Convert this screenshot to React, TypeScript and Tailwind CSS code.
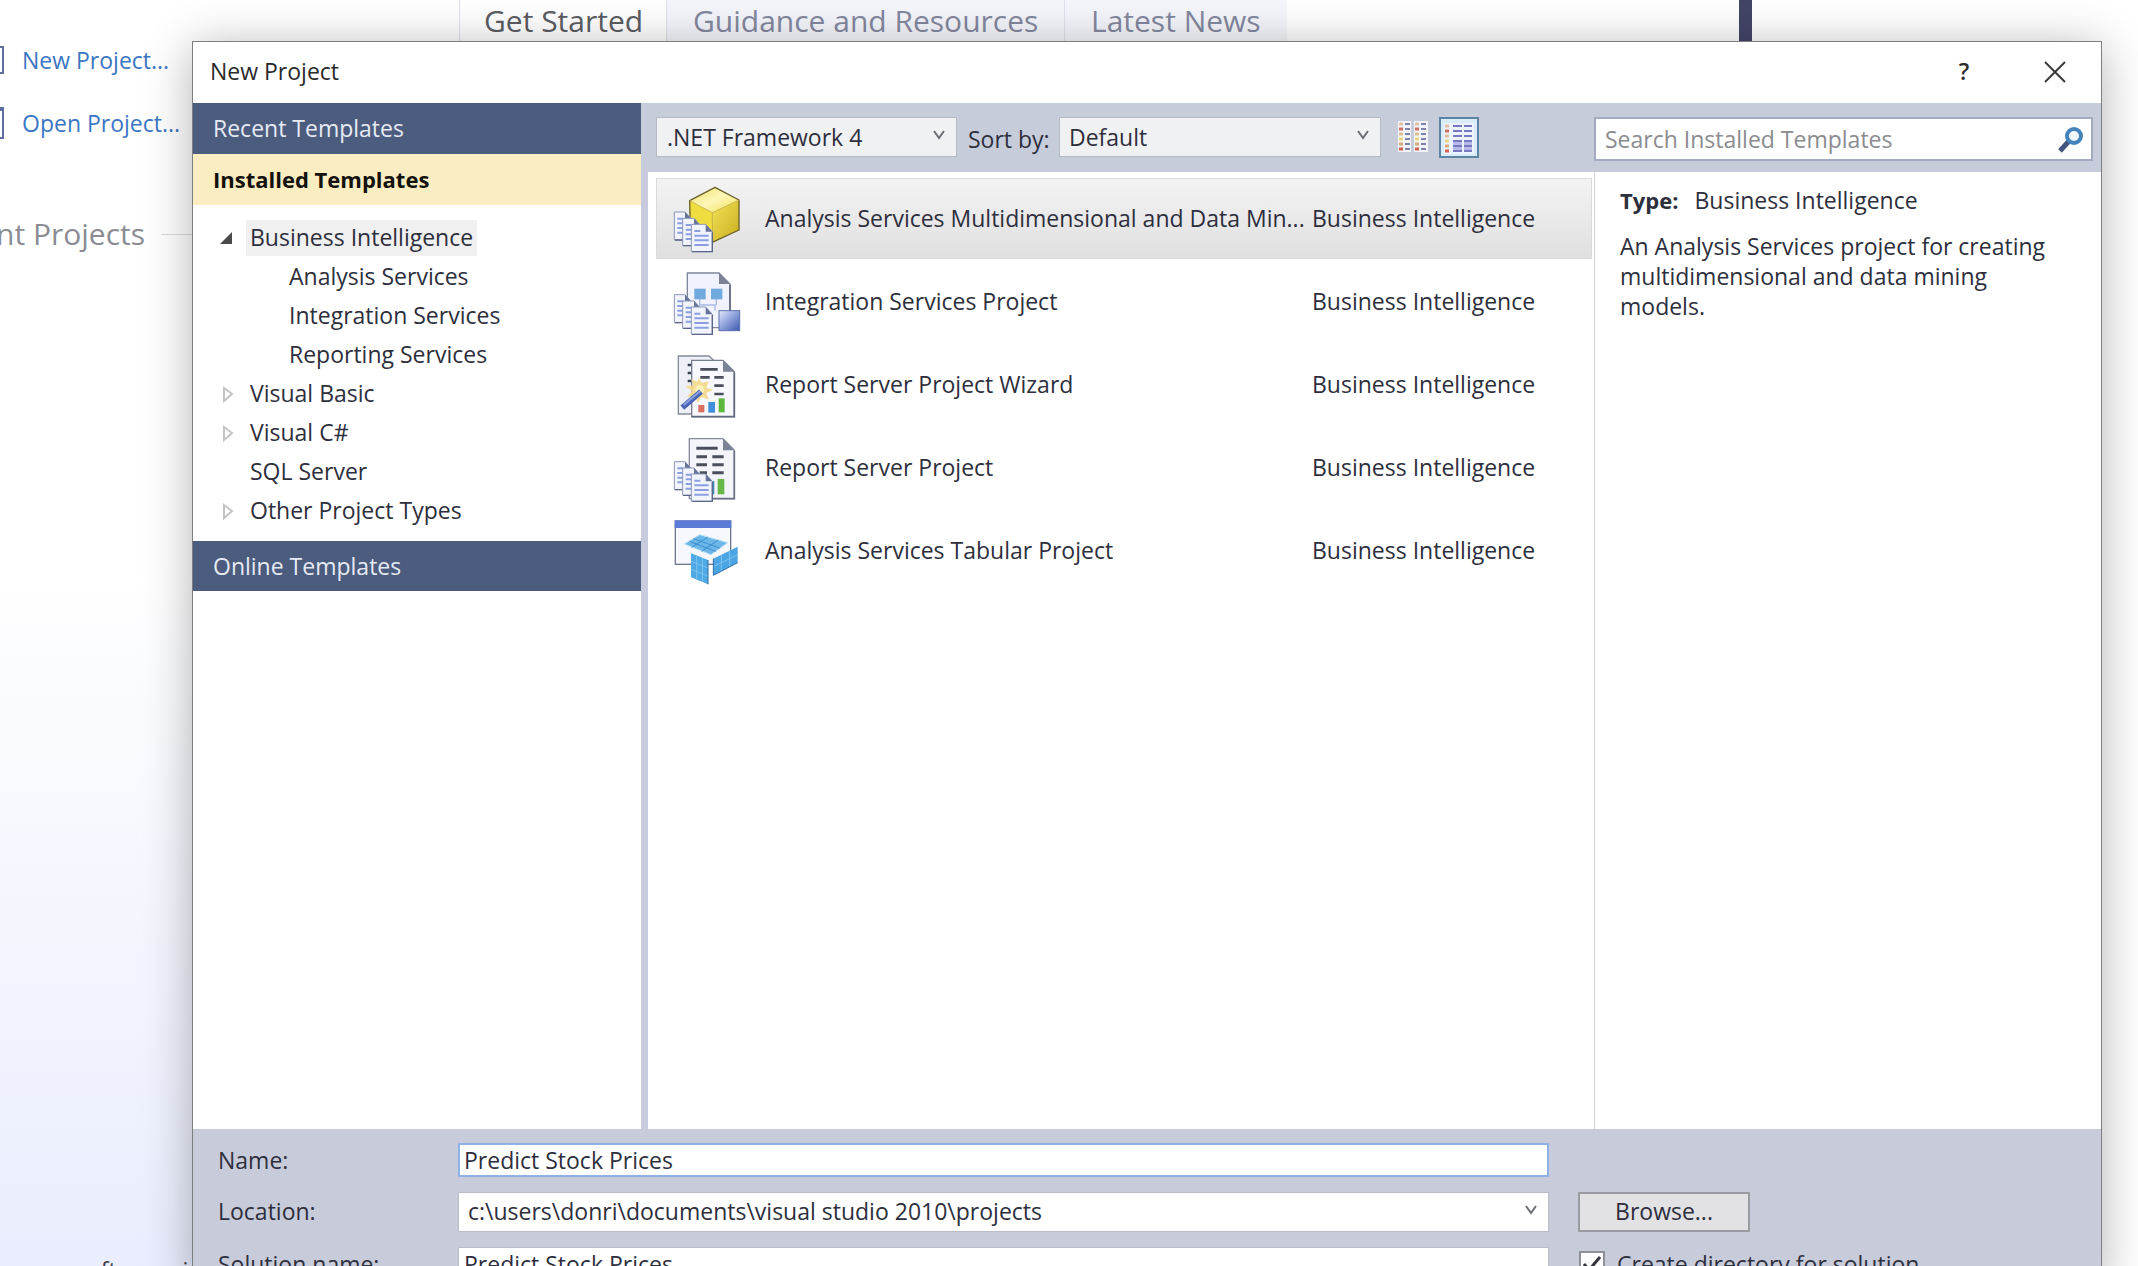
import React from 'react';

function DocStack({ dy = 0 }: { dy?: number }) {
  const pages = [
    { x: 46, y: 126, w: 52, h: 84 },
    { x: 71, y: 145, w: 54, h: 82 },
    { x: 97, y: 163, w: 63, h: 82 },
  ];
  return (
    <g transform={`translate(0 ${dy})`}>
      {pages.map((p) => (
        <g key={p.x}>
          <path
            d={`M${p.x} ${p.y}h${p.w - 20}l20 22v${p.h - 22}h-${p.w}z`}
            fill="#f1f4fd"
            stroke="#8b97b8"
            strokeWidth="3"
          />
          <path d={`M${p.x + 2} ${p.y + p.h}h${p.w - 2}v-${p.h - 24}`} fill="none" stroke="#5b6688" strokeWidth="4" />
          <path d={`M${p.x + p.w - 20} ${p.y}v22h20z`} fill="#66739a" />
          <path
            d={`M${p.x + 9} ${p.y + 20}h18M${p.x + 9} ${p.y + 34}h${p.w - 20}M${p.x + 9} ${p.y + 48}h${p.w - 20}M${p.x + 9} ${p.y + 62}h${p.w - 20}`}
            stroke="#8c9ee2"
            strokeWidth="6"
          />
        </g>
      ))}
    </g>
  );
}

function CubeIcon() {
  return (
    <svg className="size-[72px]" viewBox="36 39 216 216" aria-hidden="true">
      <defs>
        <linearGradient id="cubeTop" x1="0" y1="0" x2="1" y2="1">
          <stop offset="0" stopColor="#f3e46a" />
          <stop offset="0.5" stopColor="#fdf6b8" />
          <stop offset="1" stopColor="#f2df4f" />
        </linearGradient>
        <linearGradient id="cubeSide" x1="0" y1="0" x2="1" y2="1">
          <stop offset="0" stopColor="#f3e25a" />
          <stop offset="1" stopColor="#c9ad1c" />
        </linearGradient>
      </defs>
      <path d="M92 92L160 128L158 218L94 180z" fill="#efdc3f" />
      <path d="M160 128L240 90V180L158 218z" fill="url(#cubeSide)" />
      <path d="M92 92L168 52L240 90L160 128z" fill="url(#cubeTop)" />
      <path d="M92 92L168 52L240 90V180L158 218L94 180z" fill="none" stroke="#6b5f2a" strokeWidth="4" strokeLinejoin="round" />
      <path d="M92 92L160 128L240 90M160 128V216" fill="none" stroke="#b7a02a" strokeWidth="2" />
      <DocStack />
    </svg>
  );
}

function IntegrationIcon() {
  return (
    <svg className="size-[72px]" viewBox="36 18 216 216" aria-hidden="true">
      <defs>
        <linearGradient id="intBox" x1="0" y1="0" x2="1" y2="1">
          <stop offset="0" stopColor="#e3e9fb" />
          <stop offset="0.5" stopColor="#8c9fdb" />
          <stop offset="1" stopColor="#3d58ad" />
        </linearGradient>
      </defs>
      <path d="M85 39H180L213 72V203H85z" fill="#f0f3fd" stroke="#7f8699" strokeWidth="4" />
      <path d="M180 39V72H213z" fill="#7b8296" />
      <path d="M213 74V203" stroke="#636a80" strokeWidth="5" />
      <path d="M122 116V135H168V152M172 116V135" fill="none" stroke="#a9b9e6" strokeWidth="4" />
      <rect x="106" y="86" width="34" height="32" fill="#6fa9dd" />
      <rect x="156" y="86" width="34" height="32" fill="#6fa9dd" />
      <rect x="180" y="152" width="62" height="60" fill="url(#intBox)" stroke="#5a6fb0" strokeWidth="3" />
      <DocStack dy={-22} />
    </svg>
  );
}

function WizardIcon() {
  return (
    <svg className="size-[72px]" viewBox="36 12 216 216" aria-hidden="true">
      <path d="M58 33H150L166 48V207H58z" fill="#eef0f7" stroke="#858b9c" strokeWidth="4" />
      <path d="M86 60h10M86 84h10M86 108h10" stroke="#3c4152" strokeWidth="8" />
      <path d="M98 46H192L226 80V215H98z" fill="#f6f8fd" stroke="#767d91" strokeWidth="4" />
      <path d="M192 46V80H226z" fill="#7b8296" />
      <path d="M226 82V215H98" fill="none" stroke="#5f677e" strokeWidth="5" />
      <path d="M124 73h52M124 97h28M166 97h28M166 122h28M166 147h28" stroke="#4b4f5c" strokeWidth="8" />
      <path
        d="M120 98l8 16l22-6l-8 20l20 6l-20 10l8 20l-22-8l-12 18l-8-20l-24 2l14-18l-18-14l24-4l-8-18l18 8z"
        fill="#f3d98a"
        opacity="0.9"
      />
      <circle cx="122" cy="134" r="13" fill="#fdf3bd" />
      <path d="M70 188L126 140" stroke="#4a64b4" strokeWidth="17" />
      <path d="M74 180L124 138" stroke="#8ba3e2" strokeWidth="6" />
      <rect x="118" y="180" width="18" height="22" fill="#d9705f" />
      <rect x="148" y="171" width="20" height="32" fill="#3f8fdc" />
      <rect x="179" y="160" width="18" height="42" fill="#5cb83a" />
    </svg>
  );
}

function ReportIcon() {
  return (
    <svg className="size-[72px]" viewBox="36 21 216 216" aria-hidden="true">
      <path d="M91 41H192L226 76V221H91z" fill="#f3f5fb" stroke="#858b9c" strokeWidth="4" />
      <path d="M192 41V76H226z" fill="#7b8296" />
      <path d="M226 78V221H120" fill="none" stroke="#6a7187" strokeWidth="5" />
      <path d="M112 70h64M112 95h32M160 95h34M112 119h32M160 119h34M122 143h22M160 143h34" stroke="#4b4f5c" strokeWidth="9" />
      <rect x="146" y="168" width="20" height="40" fill="#3f8fb8" />
      <rect x="176" y="162" width="20" height="46" fill="#68b848" />
      <DocStack dy={-16} />
    </svg>
  );
}

function TabularIcon() {
  return (
    <svg className="size-[72px]" viewBox="36 15 216 216" aria-hidden="true">
      <rect x="49" y="33" width="166" height="130" fill="#f7f8fe" stroke="#72798f" strokeWidth="4" />
      <rect x="47" y="31" width="170" height="23" fill="#5c7bd6" />
      <path d="M76 102L122 74L206 98L156 134z" fill="#6cb7e8" stroke="#b8dff7" strokeWidth="3" />
      <path d="M104 86L182 114M92 94L170 124M146 82L98 112M178 90L128 124" stroke="#3a8fd0" strokeWidth="3" />
      <path d="M96 130L147 150V223L96 202z" fill="#4fa9e4" />
      <path d="M113 137V209M130 143V216M96 154L147 174M96 178L147 198" stroke="#7cc4f2" strokeWidth="3" />
      <path d="M163 146L236 110V158L163 196z" fill="#4aa5e2" />
      <path d="M187 134V183M212 122V170M163 170L236 134" stroke="#7cc4f2" strokeWidth="3" />
      <path d="M147 150V223M163 146V196L236 158" fill="none" stroke="#2f6fa8" strokeWidth="3" />
    </svg>
  );
}

function Chevron() {
  return (
    <svg className="pointer-events-none absolute right-3 top-3 h-3 w-3" viewBox="0 0 12 12" aria-hidden="true">
      <path d="M1 2L6 9L11 2" fill="none" stroke="#6c6f76" strokeWidth="2" />
    </svg>
  );
}

const dotRows = ['#e3c0a8', '#d0705c', '#dcbf90', '#e8d77c', '#d9a878', '#d6604e'];

function SmallIconsGlyph() {
  return (
    <svg className="h-8 w-8" viewBox="0 0 32 32" aria-hidden="true">
      <path d="M1 1H14V32H1zM17 1H31V32H17z" fill="#f2f4fa" />
      {dotRows.map((color, i) => (
        <g key={i}>
          <path d={`M2 ${i * 5 + 4}h4M18 ${i * 5 + 4}h4`} stroke={color} strokeWidth="3" />
          <path d={`M8 ${i * 5 + 4}h5M24 ${i * 5 + 4}h5`} stroke="#7e83ac" strokeWidth="2" />
        </g>
      ))}
    </svg>
  );
}

function MediumIconsGlyph() {
  return (
    <svg className="h-8 w-8" viewBox="0 0 32 32" aria-hidden="true">
      <path d="M1 1H31V32H1z" fill="#eef4ff" />
      <path d="M10 18H19V29H10zM21 18H29V29H21z" fill="#b9b8ea" />
      {dotRows.map((color, i) => (
        <g key={i}>
          <path d={`M2 ${i * 5 + 4}h4`} stroke={color} strokeWidth="3" />
          <path d={`M10 ${i * 5 + 4}h9M21 ${i * 5 + 4}h8`} stroke="#7779c0" strokeWidth="2" />
        </g>
      ))}
    </svg>
  );
}

const templates = [
  { name: 'Analysis Services Multidimensional and Data Min...', Icon: CubeIcon, selected: true },
  { name: 'Integration Services Project', Icon: IntegrationIcon },
  { name: 'Report Server Project Wizard', Icon: WizardIcon },
  { name: 'Report Server Project', Icon: ReportIcon },
  { name: 'Analysis Services Tabular Project', Icon: TabularIcon },
];

const tree = [
  { label: 'Business Intelligence', state: 'open' },
  { label: 'Analysis Services', state: 'child' },
  { label: 'Integration Services', state: 'child' },
  { label: 'Reporting Services', state: 'child' },
  { label: 'Visual Basic', state: 'closed' },
  { label: 'Visual C#', state: 'closed' },
  { label: 'SQL Server', state: 'leaf' },
  { label: 'Other Project Types', state: 'closed' },
];

function StartPage() {
  return (
    <div className="flex h-full">
      <div className="flex flex-1 flex-col bg-linear-to-b from-white from-45% to-[#e9edfd]">
        <nav className="flex h-11 pl-[459px] text-[30px] leading-[42px] text-[#8488a0]">
          <a href="#start" className="w-[208px] border-x border-[#dfe1ec] bg-white pl-6 text-[#5c5d63]">
            Get Started
          </a>
          <a href="#guidance" className="w-[398px] border-r border-[#dfe1ec] bg-[#f5f6fb] pl-[26px]">
            Guidance and Resources
          </a>
          <a href="#news" className="w-[222px] bg-[#f5f6fb] pl-[26px]">
            Latest News
          </a>
        </nav>
        <div className="flex flex-1 flex-col justify-between">
          <div>
            <div className="flex flex-col gap-[31px] text-[23px] leading-8 text-[#3b76c4]">
              <a href="#new" className="flex items-center gap-[18px]">
                <span className="h-7 w-1 border-y-2 border-r-2 border-[#5d6f9f] bg-white" />
                New Project...
              </a>
              <a href="#open" className="flex items-center gap-[18px]">
                <span className="h-8 w-1 border-y-2 border-t-4 border-r-2 border-[#5d6f9f] bg-white" />
                Open Project...
              </a>
            </div>
            <div className="mt-[75px] flex w-48 items-center gap-4 text-[30px] leading-10 text-[#8b8c94]">
              <span className="-ml-1 whitespace-nowrap">nt Projects</span>
              <span className="h-px flex-1 bg-[#dcdce2]" />
            </div>
          </div>
          <p className="-mb-5 h-8 whitespace-nowrap text-[23px] leading-8 text-[#3c3d48]">se page after proj</p>
        </div>
      </div>
      <div className="w-[13px] bg-[#434567]" />
      <div className="w-[386px] bg-white" />
    </div>
  );
}

function Sidebar() {
  return (
    <aside className="flex w-[448px] shrink-0 flex-col bg-white">
      <button className="h-[51px] bg-[#4b5c7f] pl-5 text-left text-[#e6eaf3]">Recent Templates</button>
      <button className="h-[51px] bg-[#fbedc2] pl-5 text-left text-[22px] font-bold text-[#14120c]">Installed Templates</button>
      <ul className="pt-[13px] pb-[11px]">
        {tree.map((n) => (
          <li key={n.label} className={n.state === 'child' ? 'flex h-[39px] items-center pl-24' : 'flex h-[39px] items-center pl-[25px]'}>
            {n.state !== 'child' && (
              <svg className="mr-2 h-5 w-5" viewBox="0 0 20 20" aria-hidden="true">
                {n.state === 'open' && <path d="M14 4V16H2z" fill="#4a4a4a" />}
                {n.state === 'closed' && <path d="M6 4L14 10L6 17z" fill="none" stroke="#c4c4c4" strokeWidth="2" />}
              </svg>
            )}
            <button className={n.state === 'open' ? 'h-9 bg-[#f0f0f0] px-1' : n.state === 'child' ? '' : 'px-1'}>{n.label}</button>
          </li>
        ))}
      </ul>
      <button className="h-[50px] bg-[#4b5c7f] pl-5 text-left text-[#e6eaf3]">Online Templates</button>
    </aside>
  );
}

function Toolbar() {
  return (
    <div className="flex h-[69px] items-start bg-[#c7ccdb] pt-[14px] pr-2 pl-[15px]">
      <div className="relative">
        <select aria-label="Framework" className="h-10 w-[301px] appearance-none border border-[#b5b9c4] bg-[#f0f1f3] pl-[10px]">
          <option>.NET Framework 4</option>
        </select>
        <Chevron />
      </div>
      <label htmlFor="sort" className="ml-[11px] w-[91px] leading-[44px] whitespace-nowrap">
        Sort by:
      </label>
      <div className="relative">
        <select id="sort" className="h-10 w-[322px] appearance-none border border-[#b5b9c4] bg-[#f0f1f3] pl-[9px]">
          <option>Default</option>
        </select>
        <Chevron />
      </div>
      <button aria-label="Small icons" className="mt-[3px] ml-4">
        <SmallIconsGlyph />
      </button>
      <button aria-label="Medium icons" className="ml-[10px] flex h-[41px] w-10 items-center justify-center border-2 border-[#5d85a3] bg-[#d8ecfa]">
        <MediumIconsGlyph />
      </button>
      <div className="relative ml-auto">
        <input
          aria-label="Search"
          placeholder="Search Installed Templates"
          className="h-11 w-[499px] border-2 border-[#a3abc0] bg-white pl-[9px] placeholder:text-[#8b8c90]"
        />
        <svg className="absolute top-[9px] right-2 size-7" viewBox="0 0 28 28" aria-hidden="true">
          <path d="M12 15L3 25" stroke="#44557f" strokeWidth="5" />
          <circle cx="17" cy="10" r="7" fill="#f2f8ff" stroke="#4583bb" strokeWidth="4" />
        </svg>
      </div>
    </div>
  );
}

function TemplateList() {
  return (
    <ul className="flex flex-1 flex-col gap-[2px] pt-[6px] pr-[2px] pl-2">
      {templates.map(({ name, Icon, selected }) => (
        <li key={name}>
          <button
            className={
              selected
                ? 'flex h-[81px] w-full items-center border border-[#dadadc] bg-linear-to-b from-[#f3f3f3] to-[#e0e0e1] pl-[14px] text-left'
                : 'flex h-[81px] w-full items-center border border-transparent pl-[14px] text-left'
            }
          >
            <Icon />
            <span className="ml-[22px] w-[547px] whitespace-nowrap">{name}</span>
            <span className="whitespace-nowrap">Business Intelligence</span>
          </button>
        </li>
      ))}
    </ul>
  );
}

function Details() {
  return (
    <section className="w-[507px] shrink-0 border-l border-[#d2d4da] pt-[11px] pr-11 pl-[25px]">
      <p className="leading-[34px]">
        <b className="mr-4 text-[22px]">Type:</b>Business Intelligence
      </p>
      <p className="mt-[14px] leading-[30px]">An Analysis Services project for creating multidimensional and data mining models.</p>
    </section>
  );
}

function Footer() {
  return (
    <form className="grid grid-cols-[240px_1091px_1fr] items-center bg-[#c8ccda] pt-[14px] pb-[5px] pl-[25px]">
      <label htmlFor="name">Name:</label>
      <input id="name" defaultValue="Predict Stock Prices" className="h-[34px] border-2 border-[#8fb2e6] bg-white pl-1" />
      <span />
      <label htmlFor="location" className="mt-[14px]">
        Location:
      </label>
      <div className="relative mt-[14px]">
        <select id="location" className="h-10 w-full appearance-none border border-[#b9bcc6] bg-white pl-[9px]">
          <option>c:\users\donri\documents\visual studio 2010\projects</option>
        </select>
        <Chevron />
      </div>
      <button type="button" className="mt-[14px] ml-[29px] h-10 w-[172px] border-2 border-[#9b9ca3] bg-[#e2e2e4]">
        Browse...
      </button>
      <label htmlFor="solution" className="mt-[15px]">
        Solution name:
      </label>
      <input id="solution" defaultValue="Predict Stock Prices" className="mt-[15px] h-[34px] border border-[#b9bcc6] bg-white pl-[5px]" />
      <label className="mt-[15px] ml-[30px] flex items-center gap-3 whitespace-nowrap">
        <span className="relative h-[26px] w-[26px]">
          <input type="checkbox" defaultChecked className="peer h-[26px] w-[26px] appearance-none border-2 border-[#8e9099] bg-white" />
          <svg className="pointer-events-none absolute top-0 left-0 hidden size-[26px] peer-checked:block" viewBox="0 0 26 26" aria-hidden="true">
            <path d="M5 13L10 19L21 6" fill="none" stroke="#33343c" strokeWidth="3" />
          </svg>
        </span>
        Create directory for solution
      </label>
    </form>
  );
}

export default function App() {
  return (
    <div className='relative h-screen overflow-hidden bg-white font-["Open_Sans","Noto_Sans",sans-serif]'>
      <StartPage />
      <div
        role="dialog"
        aria-labelledby="title"
        className="absolute top-[41px] right-9 -bottom-5 left-48 flex flex-col border border-b-0 border-[#7d7e82] bg-white text-[23px] text-[#2e2f3d] shadow-[0_6px_44px_rgba(0,0,0,0.3)]"
      >
        <header className="flex h-[61px] items-center pb-[2px] pl-[17px] text-[#2b2b2b]">
          <h1 id="title" className="flex-1">
            New Project
          </h1>
          <button aria-label="Help" className="w-10 font-semibold">
            ?
          </button>
          <button aria-label="Close" className="mr-[35px] ml-[60px]">
            <svg className="size-[22px]" viewBox="0 0 22 22" aria-hidden="true">
              <path d="M1 1L21 21M21 1L1 21" stroke="#3a3a3a" strokeWidth="2" />
            </svg>
          </button>
        </header>
        <div className="flex min-h-0 flex-1">
          <Sidebar />
          <div className="flex flex-1 flex-col">
            <Toolbar />
            <div className="flex flex-1">
              <div className="w-[7px] bg-[#c7cbdd]" />
              <TemplateList />
              <Details />
            </div>
          </div>
        </div>
        <Footer />
      </div>
    </div>
  );
}
